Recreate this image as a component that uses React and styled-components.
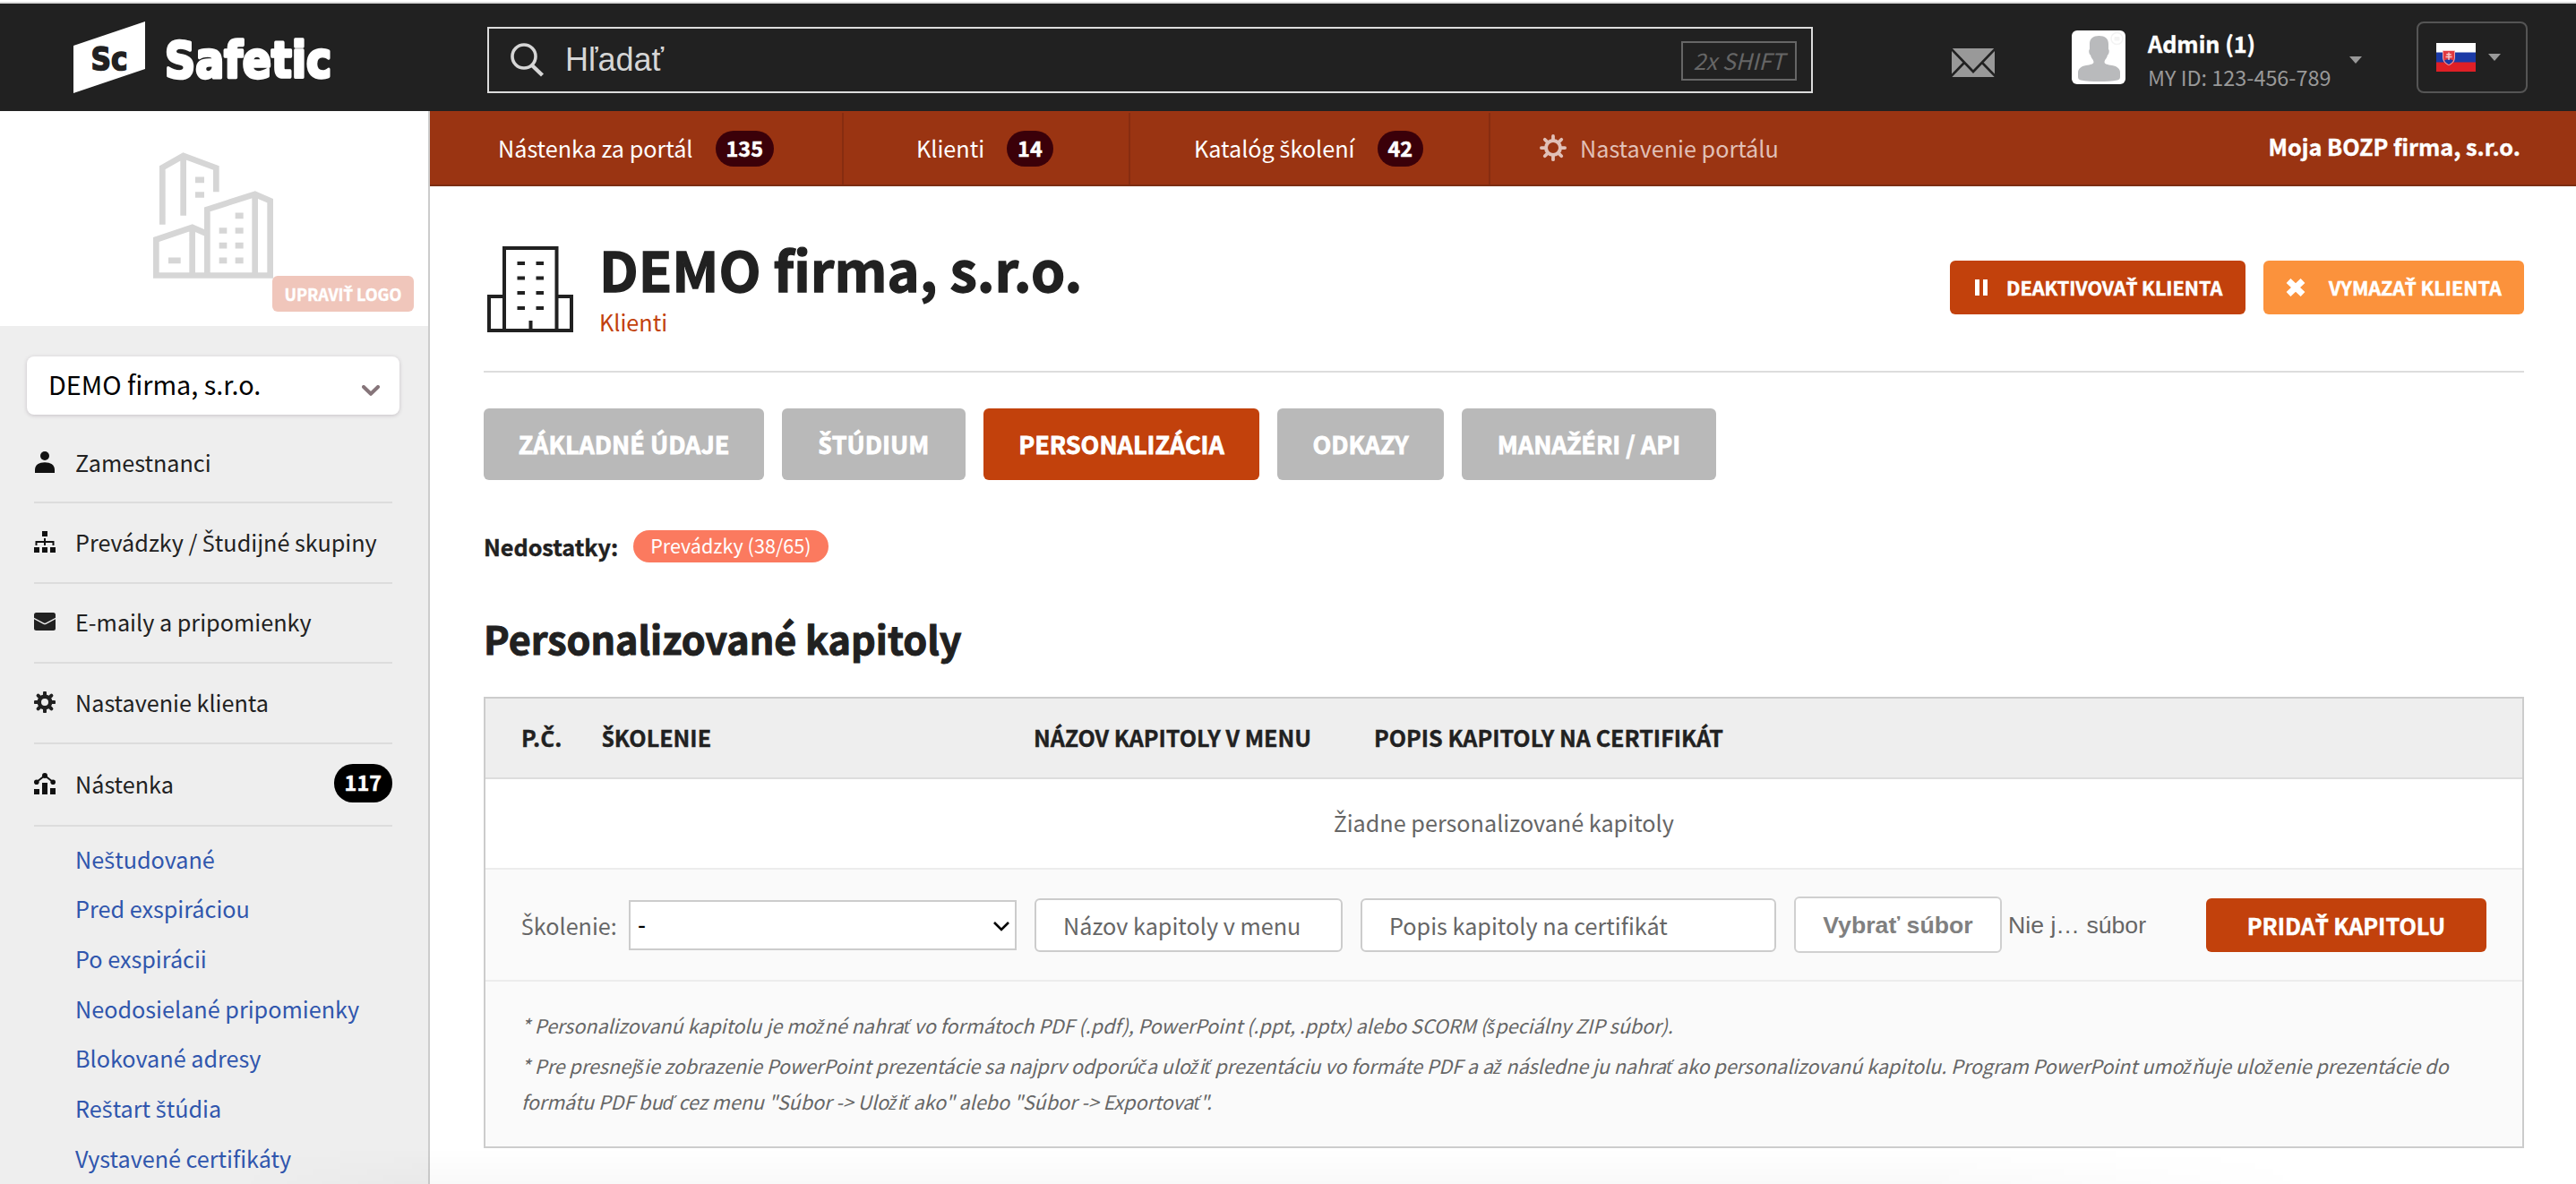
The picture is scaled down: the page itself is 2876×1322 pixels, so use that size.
import React, { useState } from "react";
import styled, { createGlobalStyle } from "styled-components";

const GlobalStyle = createGlobalStyle`
  * {
    box-sizing: border-box;
  }

  body {
    margin: 0;
    background: #fff;
    color: #212121;
    font-family: "Noto Sans CJK SC", "Open Sans", sans-serif;
    font-size: 25.2px;
    line-height: 36px;
    overflow: hidden;
  }

  a {
    color: inherit;
    text-decoration: none;
  }

  strong {
    -webkit-text-stroke: 0.4px currentColor;
  }

  button,
  input,
  select {
    font: inherit;
  }

  svg {
    display: block;
    flex-shrink: 0;
  }
`;

const Page = styled.div`
  position: relative;
  height: 1322px;
  overflow: hidden;
  border-top: 2px solid #fff;
`;

/* ---------- top bar ---------- */

const Header = styled.header`
  display: flex;
  align-items: center;
  height: 122px;
  padding: 0 54px 0 82px;
  border-top: 2px solid #ddd;
  background: #212121;
`;

const SearchBox = styled.label`
  display: flex;
  align-items: center;
  width: 1480px;
  height: 74px;
  margin: 6px 0 0 152px;
  padding: 0 16px 0 24px;
  border: 2px solid #dcdcdc;
`;

const SearchInput = styled.input`
  flex: 1;
  min-width: 0;
  height: 60px;
  margin-left: 23px;
  padding: 0;
  border: none;
  outline: none;
  background: transparent;
  color: #fff;
  font-family: "Liberation Sans", sans-serif;
  font-size: 36px;

  &::placeholder {
    color: #d6d6d6;
    opacity: 1;
  }
`;

const Shortcut = styled.span`
  width: 129px;
  height: 44px;
  margin-top: 2px;
  border: 2px solid #666;
  color: #666;
  font-style: italic;
  line-height: 39px;
  text-align: center;
`;

const MailButton = styled.a`
  margin: 12px 0 0 155px;
`;

const Avatar = styled.div`
  width: 60px;
  height: 60px;
  margin-left: 86px;
  border-radius: 6px;
  background: #fff;
  overflow: hidden;
`;

const UserInfo = styled.div`
  display: flex;
  flex-direction: column;
  width: 225px;
  margin: 6px 0 0 25px;
  line-height: 38px;
`;

const UserName = styled.strong`
  color: #fff;
`;

const UserId = styled.span`
  color: #999;
  font-size: 23.4px;
`;

const Caret = styled.span`
  margin-top: ${(p) => p.$top || 0}px;
  border: 7px solid transparent;
  border-top: 8px solid #999;
  border-bottom: none;
`;

const LangButton = styled.div`
  display: flex;
  align-items: center;
  gap: 14px;
  width: 124px;
  height: 80px;
  margin-left: 61px;
  padding-left: 20px;
  border: 2px solid #555;
  border-radius: 8px;
`;

/* ---------- layout ---------- */

const Body = styled.div`
  display: flex;
  height: 1198px;
`;

const Sidebar = styled.aside`
  flex-shrink: 0;
  width: 480px;
  border-right: 2px solid #ccc;
  background: #eee;
`;

const Content = styled.div`
  flex: 1;
  min-width: 0;
`;

/* ---------- sidebar ---------- */

const LogoPanel = styled.div`
  position: relative;
  display: flex;
  justify-content: center;
  height: 240px;
  padding: 46px 2px 0 0;
  background: #fff;
`;

const EditLogo = styled.button`
  position: absolute;
  right: 16px;
  bottom: 16px;
  width: 158px;
  height: 40px;
  padding: 0;
  border: none;
  border-radius: 6px;
  background: #f0c6bb;
  color: #fff;
  font-size: 18px;
  font-weight: 700;
  line-height: 38px;
  white-space: nowrap;
  -webkit-text-stroke: 0.4px currentColor;
`;

const ClientSelect = styled.div`
  display: flex;
  align-items: center;
  justify-content: space-between;
  width: 416px;
  height: 65px;
  margin: 34px 0 0 30px;
  padding: 0 22px 3px 24px;
  border-radius: 8px;
  background: #fff;
  box-shadow: 0 1px 4px rgba(80, 60, 80, 0.25);
  color: #000;
  font-size: 28.8px;

  svg {
    margin-top: 15px;
  }
`;

const Menu = styled.nav`
  padding: 10px 40px 0 38px;
`;

const MenuItem = styled.a`
  display: flex;
  align-items: center;
  height: ${(p) => (p.$last ? 92 : 89.4)}px;
  padding-bottom: 2px;
  border-bottom: 2px solid #dcdcdc;
`;

const MenuLabel = styled.span`
  flex: 1;
  margin-left: 22px;
  white-space: nowrap;
`;

const Badge = styled.span`
  height: ${(p) => (p.$dark ? 43 : 40)}px;
  margin-top: ${(p) => (p.$dark ? 0 : 2)}px;
  padding: 0 12px;
  border-radius: 21px;
  background: ${(p) => (p.$dark ? "#000" : "#3b0009")};
  color: #fff;
  font-size: 23.4px;
  font-weight: 700;
  line-height: ${(p) => (p.$dark ? 41 : 38)}px;
  -webkit-text-stroke: 0.5px currentColor;
`;

const SubMenu = styled.div`
  display: flex;
  flex-direction: column;
  padding: 9px 0 0 46px;
  color: #3056ad;
`;

const SubLink = styled.a`
  height: 55.67px;
  line-height: 55.67px;
  white-space: nowrap;
`;

/* ---------- portal navigation ---------- */

const PortalNav = styled.nav`
  display: flex;
  align-items: stretch;
  height: 84px;
  border-bottom: 2px solid #7c2d12;
  background: #9a3412;
  color: #fff;
`;

const PortalLink = styled.a`
  display: flex;
  align-items: center;
  gap: ${(p) => p.$gap || 25}px;
  width: ${(p) => p.$width}px;
  margin-top: 2px;
  padding: 0 0 2px ${(p) => p.$left}px;
  border-right: ${(p) => (p.$muted ? "none" : "2px solid #872c10")};
  color: ${(p) => (p.$muted ? "#e1c0b7" : "#fff")};
  white-space: nowrap;
`;

const CompanyName = styled.strong`
  margin-left: auto;
  padding-right: 62px;
  line-height: 78px;
`;

/* ---------- page content ---------- */

const Main = styled.main`
  padding: 56px 58px 0 60px;
`;

const PageHead = styled.div`
  display: flex;
  align-items: flex-start;
  height: 152px;
  border-bottom: 2px solid #ddd;
`;

const HeadIcon = styled.div`
  margin: 11px 29px 0 4px;
`;

const HeadText = styled.div`
  flex: 1;
`;

const Title = styled.h1`
  margin: 0;
  font-size: 61.2px;
  font-weight: 700;
  line-height: 71px;
  -webkit-text-stroke: 1.3px currentColor;
`;

const Crumb = styled.a`
  display: block;
  margin-top: 4px;
  color: #c2410c;
  line-height: 40px;
`;

const HeadActions = styled.div`
  display: flex;
  gap: 20px;
  margin-top: 27px;
`;

const ActionButton = styled.button`
  display: flex;
  align-items: center;
  gap: ${(p) => (p.$light ? 26 : 21)}px;
  width: ${(p) => (p.$light ? 291 : 330)}px;
  height: 60px;
  padding: 0 0 0 ${(p) => (p.$light ? 25 : 28)}px;
  border: none;
  border-radius: 6px;
  background: ${(p) => (p.$light ? "#fb923c" : "#c2410c")};
  color: #fff;
  font-size: 21.6px;
  font-weight: 700;
  white-space: nowrap;
  -webkit-text-stroke: 0.5px currentColor;
`;

const Tabs = styled.div`
  display: flex;
  gap: 20px;
  margin-top: 40px;
`;

const Tab = styled.button`
  width: ${(p) => p.$width}px;
  height: 80px;
  padding: 0;
  border: none;
  border-radius: 6px;
  background: ${(p) => (p.$active ? "#c2410c" : "#b9b9b9")};
  color: #fff;
  font-size: 27px;
  font-weight: 700;
  white-space: nowrap;
  -webkit-text-stroke: 0.8px currentColor;
`;

const Issues = styled.div`
  display: flex;
  align-items: center;
  gap: 17px;
  height: 36px;
  margin-top: 56px;
`;

const IssuePill = styled.a`
  height: 36px;
  padding: 0 19px;
  border-radius: 18px;
  background: #fb7a5f;
  color: #fff;
  font-size: 21.6px;
  line-height: 34px;
`;

const SectionTitle = styled.h2`
  margin: 54px 0 36px;
  font-size: 43.1px;
  font-weight: 700;
  line-height: 60px;
  -webkit-text-stroke: 1px currentColor;
`;

const Table = styled.section`
  border: 2px solid #ccc;
`;

const TableHead = styled.div`
  display: grid;
  grid-template-columns: 90px 482px 380px 1fr;
  height: 90px;
  padding-left: 40px;
  border-bottom: 2px solid #ddd;
  background: #eee;
  font-size: 25.1px;
  font-weight: 700;
  line-height: 87px;
  -webkit-text-stroke: 0.4px currentColor;
`;

const EmptyRow = styled.div`
  height: 101px;
  border-bottom: 2px solid #ececec;
  color: #666;
  line-height: 97px;
  text-align: center;
`;

const FormRow = styled.form`
  display: flex;
  align-items: center;
  height: 125px;
  padding: 0 40px 0 40px;
  border-bottom: 2px solid #ececec;
  background: #fafafa;
  color: #666;
`;

const FieldLabel = styled.label`
  width: 120px;
  white-space: nowrap;
`;

const SelectWrap = styled.div`
  position: relative;
  width: 433px;
  margin-right: 20px;

  svg {
    position: absolute;
    top: 24px;
    right: 8px;
  }
`;

const Select = styled.select`
  appearance: none;
  display: block;
  width: 100%;
  height: 56px;
  padding: 0 8px;
  border: 2px solid #ccc;
  border-radius: 0;
  background: #fff;
  color: #000;
  font-family: "Liberation Sans", sans-serif;
  font-size: 27px;
`;

const TextInput = styled.input`
  width: ${(p) => p.$width}px;
  height: 60px;
  margin-right: 20px;
  padding: 0 30px;
  border: 2px solid #ccc;
  border-radius: 6px;
  background: #fff;

  &::placeholder {
    color: #666;
    opacity: 1;
  }
`;

const FileButton = styled.button`
  width: 232px;
  height: 63px;
  padding: 0;
  border: 2px solid #d0d0d0;
  border-radius: 6px;
  background: #fff;
  color: #808080;
  font-family: "Liberation Sans", sans-serif;
  font-size: 26.67px;
  font-weight: 700;
`;

const FileName = styled.span`
  margin-left: 7px;
  font-family: "Liberation Sans", sans-serif;
  font-size: 26.67px;
  white-space: nowrap;
`;

const SubmitButton = styled.button`
  width: 313px;
  height: 60px;
  margin-left: auto;
  padding: 0;
  border: none;
  border-radius: 6px;
  background: #c2410c;
  color: #fff;
  font-weight: 700;
  white-space: nowrap;
  -webkit-text-stroke: 0.5px currentColor;
`;

const Notes = styled.div`
  height: 184px;
  padding: 29px 39px 0 40px;
  background: #fafafa;
  color: #666;
  font-size: 21.6px;
  font-style: italic;
  letter-spacing: -0.03px;
  line-height: 40px;

  p {
    margin: 0 0 5px;
  }
`;

const BottomShade = styled.div`
  position: absolute;
  left: 260px;
  right: 280px;
  bottom: 0;
  height: 40px;
  background: linear-gradient(rgba(0, 0, 0, 0), rgba(0, 0, 0, 0.025));
  mask-image: linear-gradient(90deg, transparent, #000 240px, #000 80%, transparent);
  pointer-events: none;
`;

/* The main family has no glyphs for these letters, they come from Open Sans */
const Caron = styled.span`
  font-family: "Open Sans", sans-serif;
  line-height: 1;
`;

function Text({ children }) {
  return children
    .split(/([šŠčČžŽťŤľĽď])/)
    .map((part, i) => (i % 2 ? <Caron key={i}>{part}</Caron> : part));
}

/* ---------- drawings ---------- */

const SafeticLogo = () => (
  <svg width="310" height="82" viewBox="82 23 310 82">
    <path d="M82 51 L162 24 V77 L82 104 Z" fill="#fff" />
    <g fontFamily="DejaVu Sans" fontWeight="700">
      <text
        x="101.500"
        y="77.500"
        fontSize="36"
        fill="#212121"
        stroke="#212121"
        strokeWidth="1.6"
        textLength="41"
        lengthAdjust="spacingAndGlyphs"
      >
        Sc
      </text>
      <text
        x="184"
        y="86"
        fontSize="55"
        fill="#fff"
        stroke="#fff"
        strokeWidth="3.6"
        strokeLinejoin="round"
        textLength="186"
        lengthAdjust="spacingAndGlyphs"
      >
        Safetic
      </text>
    </g>
  </svg>
);

const SearchIcon = () => (
  <svg width="38" height="38" viewBox="0 0 38 38" fill="none" stroke="#d6d6d6">
    <circle cx="15" cy="15" r="13" strokeWidth="3.6" />
    <path d="M24 25 L35.5 36" strokeWidth="4.4" />
  </svg>
);

const MailIcon = () => (
  <svg width="48" height="32" viewBox="0 0 48 32" fill="none" stroke="#212121" strokeWidth="2.6">
    <rect width="48" height="32" fill="#999" stroke="none" />
    <path d="M-1 0 L24 26 L49 0 M-1 31.5 L13.5 16.5 M49 31.5 L34.5 16.5" />
  </svg>
);

const PersonPhoto = () => (
  <svg width="60" height="60" viewBox="0 0 60 60" fill="#b9babc">
    <path d="M30.500 6 C37 6 41 9 41 15 V21 C42.500 22 41.500 27 40 27.500 C39.500 31 37 32 36.500 35 C36.500 38 40 38 45 39 C51 40 54 43 54 47 V52 C54 54 53 55 51 55.500 C40 57.500 21 57.500 10 55.500 C8 55 7 54 7 52 V47 C7 43 10 40 16 39 C21 38 24.500 38 24.500 35 C24 32 21.500 31 21 27.500 C19.500 27 18.500 22 20 21 V15 C20 9 24 6 30.500 6 Z" />
    <circle cx="50.500" cy="9" r="6.500" fill="none" stroke="#f3f3f3" strokeWidth="1.500" />
    <rect x="47.500" y="7" width="6" height="4.500" rx="1" fill="#f3f3f3" />
  </svg>
);

const SlovakFlag = () => (
  <svg width="44" height="32" viewBox="0 0 44 32">
    <rect width="44" height="11" fill="#fff" />
    <rect y="10.500" width="44" height="11.500" fill="#1b3aa6" />
    <rect y="21.500" width="44" height="10.500" fill="#df1f26" />
    <path d="M7 8.500 H21 V16 C21 21 17.500 23.500 14 25 C10.500 23.500 7 21 7 16 Z" fill="#f0a0a4" />
    <path d="M8 9 H20 V16 C20 20 17 22.500 14 24 C11 22.500 8 20 8 16 Z" fill="#e23a40" />
    <path d="M9 19.500 Q14 16.500 19 19.500 Q17.500 22.500 14 24 Q10.500 22.500 9 19.500 Z" fill="#1b3aa6" />
    <path d="M14 10.500 V19 M11.300 12.800 H16.700 M10.500 15.500 H17.500" stroke="#f7c9cb" strokeWidth="1.400" />
  </svg>
);

const CityIcon = () => (
  <svg width="134" height="141" viewBox="333 480 402 422" fill="none" stroke="#d6d6d6" strokeWidth="20">
    <path d="M364 722 V531 L434 491 L544 532 V612 M434 495 V692" />
    <path d="M514 892 V671 L674 620 L725 642 V892 M674 622 V892" />
    <path d="M343 892 V772 L464 731 L514 753 M464 733 V892 M333 892 H735" />
    <path d="M474 572 H504 M474 622 H504 M608 692 H635 M384 842 H425" />
    <path d="M554 742 H580 M554 792 H580 M554 842 H580 M608 742 H635 M608 792 H635 M608 842 H635" />
  </svg>
);

const BuildingIcon = () => (
  <svg width="96" height="96" viewBox="0 0 96 96" fill="none" stroke="#212121" strokeWidth="4">
    <path d="M19 94 V2 H77.500 V94 M19 56 H2 V94 H94 V56 H77.500 M48.500 83 V94" />
    <path d="M33.500 19 H42 M54.500 19 H63 M33.500 35.500 H42 M54.500 35.500 H63 M33.500 52 H42 M54.500 52 H63 M33.500 69 H42 M54.500 69 H63" />
  </svg>
);

const TEETH = [0, 45, 90, 135, 180, 225, 270, 315];

const GearIcon = ({ size = 24, ring = 4.4, radius = 6.2, tooth = 4, color = "#212121" }) => (
  <svg width={size} height={size} viewBox="-12 -12 24 24" fill="none" stroke={color}>
    <circle r={radius} strokeWidth={ring} />
    {TEETH.map((deg) => (
      <path
        key={deg}
        d={`M0 ${-radius - 0.5} V-10.500`}
        strokeWidth={tooth}
        strokeLinecap="round"
        transform={`rotate(${deg})`}
      />
    ))}
  </svg>
);

const UserIcon = () => (
  <svg width="24" height="24" viewBox="0 0 24 24" fill="#111">
    <circle cx="12" cy="5" r="5" />
    <path d="M1 24 V21 C1 15 5.500 12.300 12 12.300 S23 15 23 21 V24 Z" />
  </svg>
);

const SitemapIcon = () => (
  <svg width="24" height="24" viewBox="0 0 24 24" fill="#111">
    <path d="M9 0 H15 V6 H9 Z M0 18 H6 V24 H0 Z M9 18 H15 V24 H9 Z M18 18 H24 V24 H18 Z" />
    <path d="M2.500 16 V12 H21.500 V16 M12 8 V16" fill="none" stroke="#111" strokeWidth="2" />
  </svg>
);

const EnvelopeIcon = () => (
  <svg width="24" height="20" viewBox="0 0 24 20">
    <rect width="24" height="20" rx="2.500" fill="#212121" />
    <path d="M-1 6 L11 12.300 Q12 12.800 13 12.300 L25 6" fill="none" stroke="#eee" strokeWidth="1.500" />
  </svg>
);

const BoardIcon = () => (
  <svg width="24" height="24" viewBox="0 0 24 24" fill="#111">
    <path d="M0 18 H6 V24 H0 Z M9 11 H15 V24 H9 Z M18 17 H24 V24 H18 Z" />
    <circle cx="2.800" cy="10.300" r="2.800" />
    <circle cx="12" cy="3" r="3" />
    <circle cx="21.200" cy="10.300" r="2.800" />
    <path d="M3 10 L12 3 L21 10" fill="none" stroke="#111" strokeWidth="2" />
  </svg>
);

const ChevronIcon = () => (
  <svg width="20" height="13" viewBox="0 0 20 13" fill="none" stroke="#86757a" strokeWidth="4">
    <path d="M2 2 L10 9.800 L18 2" strokeLinecap="round" strokeLinejoin="round" />
  </svg>
);

const SelectArrow = () => (
  <svg width="18" height="11" viewBox="0 0 18 11" fill="none" stroke="#000" strokeWidth="2.600">
    <path d="M1 1 L9 9 L17 1" />
  </svg>
);

const PauseIcon = () => (
  <svg width="14" height="18" viewBox="0 0 14 18" fill="#fff">
    <path d="M0 0 H5 V18 H0 Z M9 0 H14 V18 H9 Z" />
  </svg>
);

const CrossIcon = () => (
  <svg width="22" height="20" viewBox="0 0 22 20" stroke="#fff" strokeWidth="7">
    <path d="M3 2.500 L19 17.500 M19 2.500 L3 17.500" />
  </svg>
);

/* ---------- data ---------- */

const menuItems = [
  { label: "Zamestnanci", icon: <UserIcon /> },
  { label: "Prevádzky / Študijné skupiny", icon: <SitemapIcon /> },
  { label: "E-maily a pripomienky", icon: <EnvelopeIcon /> },
  { label: "Nastavenie klienta", icon: <GearIcon /> },
  { label: "Nástenka", icon: <BoardIcon />, count: 117 },
];

const subLinks = [
  "Neštudované",
  "Pred exspiráciou",
  "Po exspirácii",
  "Neodosielané pripomienky",
  "Blokované adresy",
  "Reštart štúdia",
  "Vystavené certifikáty",
];

const portalLinks = [
  { label: "Nástenka za portál", count: 135, width: 462, left: 76 },
  { label: "Klienti", count: 14, width: 320, left: 81 },
  { label: "Katalóg školení", count: 42, width: 402, left: 71 },
];

const tabs = [
  { label: "ZÁKLADNÉ ÚDAJE", width: 313 },
  { label: "ŠTÚDIUM", width: 205 },
  { label: "PERSONALIZÁCIA", width: 308 },
  { label: "ODKAZY", width: 186 },
  { label: "MANAŽÉRI / API", width: 284 },
];

const columns = ["P.Č.", "ŠKOLENIE", "NÁZOV KAPITOLY V MENU", "POPIS KAPITOLY NA CERTIFIKÁT"];

export default function App() {
  const [activeTab, setActiveTab] = useState("PERSONALIZÁCIA");

  return (
    <Page>
      <GlobalStyle />
      <Header>
        <SafeticLogo />
        <SearchBox>
          <SearchIcon />
          <SearchInput type="text" placeholder="Hľadať" />
          <Shortcut>2x SHIFT</Shortcut>
        </SearchBox>
        <MailButton>
          <MailIcon />
        </MailButton>
        <Avatar>
          <PersonPhoto />
        </Avatar>
        <UserInfo>
          <UserName>Admin (1)</UserName>
          <UserId>MY ID: 123-456-789</UserId>
        </UserInfo>
        <Caret $top={6} />
        <LangButton>
          <SlovakFlag />
          <Caret />
        </LangButton>
      </Header>

      <Body>
        <Sidebar>
          <LogoPanel>
            <CityIcon />
            <EditLogo>
              <Text>UPRAVIŤ LOGO</Text>
            </EditLogo>
          </LogoPanel>
          <ClientSelect>
            DEMO firma, s.r.o.
            <ChevronIcon />
          </ClientSelect>
          <Menu>
            {menuItems.map((item) => (
              <MenuItem key={item.label} $last={!!item.count}>
                {item.icon}
                <MenuLabel>
                  <Text>{item.label}</Text>
                </MenuLabel>
                {item.count && <Badge $dark>{item.count}</Badge>}
              </MenuItem>
            ))}
            <SubMenu>
              {subLinks.map((label) => (
                <SubLink key={label}>
                  <Text>{label}</Text>
                </SubLink>
              ))}
            </SubMenu>
          </Menu>
        </Sidebar>

        <Content>
          <PortalNav>
            {portalLinks.map((link) => (
              <PortalLink key={link.label} $width={link.width} $left={link.left}>
                <span>
                  <Text>{link.label}</Text>
                </span>
                <Badge>{link.count}</Badge>
              </PortalLink>
            ))}
            <PortalLink $muted $left={55} $gap={15}>
              <GearIcon size={30} ring={3.2} radius={6.4} tooth={3} color="#e1c0b7" />
              Nastavenie portálu
            </PortalLink>
            <CompanyName>Moja BOZP firma, s.r.o.</CompanyName>
          </PortalNav>

          <Main>
            <PageHead>
              <HeadIcon>
                <BuildingIcon />
              </HeadIcon>
              <HeadText>
                <Title>DEMO firma, s.r.o.</Title>
                <Crumb>Klienti</Crumb>
              </HeadText>
              <HeadActions>
                <ActionButton>
                  <PauseIcon />
                  <span>
                    <Text>DEAKTIVOVAŤ KLIENTA</Text>
                  </span>
                </ActionButton>
                <ActionButton $light>
                  <CrossIcon />
                  <span>
                    <Text>VYMAZAŤ KLIENTA</Text>
                  </span>
                </ActionButton>
              </HeadActions>
            </PageHead>

            <Tabs>
              {tabs.map(({ label, width }) => (
                <Tab
                  key={label}
                  $width={width}
                  $active={label === activeTab}
                  onClick={() => setActiveTab(label)}
                >
                  <Text>{label}</Text>
                </Tab>
              ))}
            </Tabs>

            <Issues>
              <strong>Nedostatky:</strong>
              <IssuePill>Prevádzky (38/65)</IssuePill>
            </Issues>

            <SectionTitle>Personalizované kapitoly</SectionTitle>

            <Table>
              <TableHead>
                {columns.map((name) => (
                  <span key={name}>
                    <Text>{name}</Text>
                  </span>
                ))}
              </TableHead>
              <EmptyRow>
                <Text>Žiadne personalizované kapitoly</Text>
              </EmptyRow>
              <FormRow onSubmit={(e) => e.preventDefault()}>
                <FieldLabel>
                  <Text>Školenie:</Text>
                </FieldLabel>
                <SelectWrap>
                  <Select>
                    <option>-</option>
                  </Select>
                  <SelectArrow />
                </SelectWrap>
                <TextInput $width={344} placeholder="Názov kapitoly v menu" />
                <TextInput $width={464} placeholder="Popis kapitoly na certifikát" />
                <FileButton type="button">Vybrať súbor</FileButton>
                <FileName>Nie j… súbor</FileName>
                <SubmitButton type="submit">
                  <Text>PRIDAŤ KAPITOLU</Text>
                </SubmitButton>
              </FormRow>
              <Notes>
                <p>
                  <Text>
                    * Personalizovanú kapitolu je možné nahrať vo formátoch PDF (.pdf), PowerPoint (.ppt, .pptx) alebo SCORM (špeciálny ZIP súbor).
                  </Text>
                </p>
                <p>
                  <Text>
                    {'* Pre presnejšie zobrazenie PowerPoint prezentácie sa najprv odporúča uložiť prezentáciu vo formáte PDF a až následne ju nahrať ako personalizovanú kapitolu. Program PowerPoint umožňuje uloženie prezentácie do formátu PDF buď cez menu "Súbor -> Uložiť ako" alebo "Súbor -> Exportovať".'}
                  </Text>
                </p>
              </Notes>
            </Table>
          </Main>
        </Content>
      </Body>
      <BottomShade />
    </Page>
  );
}
